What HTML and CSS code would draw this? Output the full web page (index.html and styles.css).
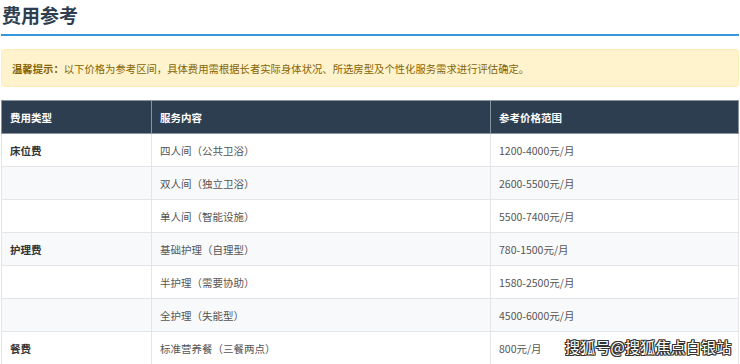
FILE: index.html
```html
<!DOCTYPE html>
<html lang="zh-CN">
<head>
<meta charset="utf-8">
<title>费用参考</title>
<link rel="stylesheet" href="styles.css">
</head>
<body>
<div class="page">
  <h2 class="title">费用参考</h2>
  <div class="notice"><strong>温馨提示：</strong>以下价格为参考区间，具体费用需根据长者实际身体状况、所选房型及个性化服务需求进行评估确定。</div>
  <table class="fees">
    <colgroup>
      <col class="c1"><col class="c2"><col class="c3">
    </colgroup>
    <thead>
      <tr><th>费用类型</th><th>服务内容</th><th>参考价格范围</th></tr>
    </thead>
    <tbody>
      <tr><td class="type">床位费</td><td>四人间（公共卫浴）</td><td>1200-4000元/月</td></tr>
      <tr><td class="type"></td><td>双人间（独立卫浴）</td><td>2600-5500元/月</td></tr>
      <tr><td class="type"></td><td>单人间（智能设施）</td><td>5500-7400元/月</td></tr>
      <tr><td class="type">护理费</td><td>基础护理（自理型）</td><td>780-1500元/月</td></tr>
      <tr><td class="type"></td><td>半护理（需要协助）</td><td>1580-2500元/月</td></tr>
      <tr><td class="type"></td><td>全护理（失能型）</td><td>4500-6000元/月</td></tr>
      <tr><td class="type">餐费</td><td>标准营养餐（三餐两点）</td><td>800元/月</td></tr>
    </tbody>
  </table>
</div>
<div class="watermark">搜狐号@搜狐焦点白银站</div>
</body>
</html>
```

FILE: styles.css
```css
html, body {
  margin: 0;
  padding: 0;
  background: #ffffff;
}
body {
  font-family: "Noto Sans CJK SC", "Noto Sans", "Liberation Sans", sans-serif;
  color: #555555;
  overflow: hidden;
}
.page {
  padding: 0 1px;
}
.title {
  margin: 0;
  padding: 1px 0 6px 1px;
  height: 27px;
  font-size: 19px;
  line-height: 27px;
  font-weight: 700;
  color: #2c3e50;
  border-bottom: 2px solid #3498db;
}
.notice {
  margin-top: 13px;
  box-sizing: border-box;
  height: 38px;
  padding: 0 10px;
  display: flex;
  align-items: center;
  background: #fff3cd;
  border: 1px solid #ffeeba;
  border-radius: 3px;
  color: #856404;
  font-size: 10.35px;
}
.notice strong {
  font-weight: 700;
}
.fees {
  margin-top: 13px;
  width: 100%;
  border-collapse: collapse;
  table-layout: fixed;
  font-size: 10.5px;
}
.c1 { width: 150px; }
.c2 { width: 339px; }
.fees th {
  height: 33px;
  box-sizing: border-box;
  padding: 0 8px;
  text-align: left;
  background: #2c3e50;
  color: #ffffff;
  font-weight: 700;
  border: 1px solid #8a949e;
}
.fees td {
  height: 33px;
  box-sizing: border-box;
  padding: 0 8px;
  border: 1px solid #e3e5e8;
  color: #555555;
}
.fees tbody tr:nth-child(even) td {
  background: #f8f9fa;
}
.fees td.type {
  font-weight: 700;
  color: #333333;
}
.watermark {
  position: absolute;
  left: 565px;
  top: 336px;
  font-size: 15px;
  line-height: 22px;
  color: #ffffff;
  letter-spacing: 0.2px;
  text-shadow: 1px 0 0 #333, -1px 0 0 #333, 0 1px 0 #333, 0 -1px 0 #333, 1px 1px 0 #333, -1px -1px 0 #333, 1px -1px 0 #333, -1px 1px 0 #333;
}
```
